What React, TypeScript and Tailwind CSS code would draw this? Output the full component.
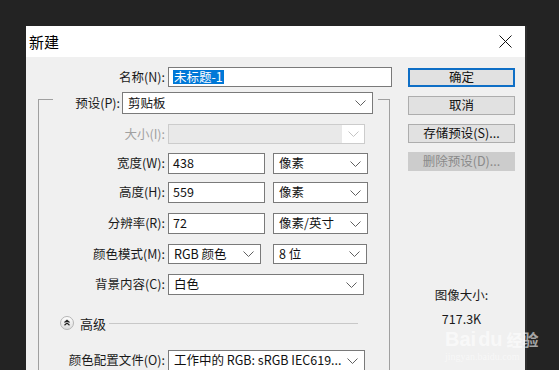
import React from "react";

const cjk = "font-['Microsoft_YaHei','Noto_Sans_CJK_SC',sans-serif]";

function Chevron({ disabled }: { disabled?: boolean }) {
    return (
        <svg width="11" height="6" viewBox="0 0 11 6" className="shrink-0">
            <polyline
                points="0.5,0.5 5.5,5.5 10.5,0.5"
                fill="none"
                stroke={disabled ? "#c4c4c4" : "#606060"}
                strokeWidth="1"
            />
        </svg>
    );
}

function Label({ text, w, disabled }: { text: string; w: string; disabled?: boolean }) {
    return (
        <div className={`${w} shrink-0 text-right whitespace-nowrap ${disabled ? "text-[#a0a0a0]" : "text-[#1a1a1a]"}`}>
            {text}
        </div>
    );
}

function Field({ value, w }: { value: string; w: string }) {
    return (
        <div className={`${w} h-full flex items-center border border-[#7a7a7a] bg-white pl-[4px] text-[#111]`}>
            {value}
        </div>
    );
}

function Select({ value, w }: { value: string; w: string }) {
    return (
        <div className={`${w} h-full flex items-center justify-between border border-[#7a7a7a] bg-white pl-[5px] pr-[6px] text-[#111] whitespace-nowrap`}>
            <span>{value}</span>
            <Chevron />
        </div>
    );
}

function Btn({ text, primary, disabled }: { text: string; primary?: boolean; disabled?: boolean }) {
    let cls = "border border-[#adadad] bg-[#e1e1e1] text-[#111]";
    if (primary) cls = "border-2 border-[#0f6fc6] bg-[#e1e1e1] text-[#111]";
    if (disabled) cls = "border border-[#cccccc] bg-[#cccccc] text-[#8a8a8a]";
    return (
        <div className={`h-[19px] w-full flex items-center justify-center ${cls}`}>{text}</div>
    );
}

export default function App() {
    return (
        <div className={`relative h-[370px] w-[559px] overflow-hidden bg-[#232323] pl-[26px] pt-[26px] ${cjk} text-[12.5px] leading-none`}>
            <div className="flex h-[360px] w-[499px] flex-col shadow-[2px_0_0_#2e2e2e]">
                {/* title bar */}
                <div className="flex h-[31px] shrink-0 items-center justify-between bg-white pl-[3px] pr-[13px]">
                    <span className="text-[15px] text-black">新建</span>
                    <svg width="13" height="13" viewBox="0 0 13 13">
                        <path d="M0.5 0.5 L12.5 12.5 M12.5 0.5 L0.5 12.5" stroke="#111" strokeWidth="1" />
                    </svg>
                </div>

                {/* body */}
                <div className="flex flex-1 bg-[#f0f0f0]">
                    {/* left column */}
                    <div className="flex w-[372px] flex-col">
                        <div className="mt-[10px] flex h-[20px] items-center gap-[3px]">
                            <Label text="名称(N):" w="w-[139px]" />
                            <div className="flex h-full w-[224px] items-center border border-[#7a7a7a] bg-white pl-[4px]">
                                <span className="bg-[#0078d7] px-[1px] py-[1px] text-white">未标题-1</span>
                            </div>
                        </div>

                        <div className="ml-[12px] mt-[12px] flex w-[352px] flex-1 flex-col border-l border-r border-t border-[#a0a0a0]">
                            {/* preset row sits on the frame */}
                            <div className="-mt-[8px] ml-[14px] flex h-[22px] w-[325px] items-center gap-[2px] bg-[#f0f0f0]">
                                <Label text="预设(P):" w="w-[67px]" />
                                <Select value="剪贴板" w="w-[251px]" />
                            </div>

                            <div className="mt-[10px] flex h-[20px] items-center gap-[3px]">
                                <Label text="大小(I):" w="w-[126px]" disabled />
                                <div className="flex h-full w-[197px] border border-[#cccccc] bg-[#e9e9e9]">
                                    <div className="flex-1" />
                                    <div className="flex w-[22px] items-center justify-center bg-white">
                                        <Chevron disabled />
                                    </div>
                                </div>
                            </div>

                            <div className="mt-[9px] flex h-[21px] items-center gap-[3px]">
                                <Label text="宽度(W):" w="w-[126px]" />
                                <Field value="438" w="w-[97px]" />
                                <div className="w-[2px]" />
                                <Select value="像素" w="w-[95px]" />
                            </div>

                            <div className="mt-[8px] flex h-[21px] items-center gap-[3px]">
                                <Label text="高度(H):" w="w-[126px]" />
                                <Field value="559" w="w-[97px]" />
                                <div className="w-[2px]" />
                                <Select value="像素" w="w-[95px]" />
                            </div>

                            <div className="mt-[10px] flex h-[21px] items-center gap-[3px]">
                                <Label text="分辨率(R):" w="w-[126px]" />
                                <Field value="72" w="w-[97px]" />
                                <div className="w-[2px]" />
                                <Select value="像素/英寸" w="w-[95px]" />
                            </div>

                            <div className="mt-[10px] flex h-[20px] items-center gap-[3px]">
                                <Label text="颜色模式(M):" w="w-[126px]" />
                                <Select value="RGB 颜色" w="w-[93px]" />
                                <div className="w-[6px]" />
                                <Select value="8 位" w="w-[94px]" />
                            </div>

                            <div className="mt-[10px] flex h-[21px] items-center gap-[3px]">
                                <Label text="背景内容(C):" w="w-[126px]" />
                                <Select value="白色" w="w-[196px]" />
                            </div>

                            <div className="ml-[21px] mr-[31px] mt-[21px] flex h-[14px] items-center">
                                <svg width="14" height="14" viewBox="0 0 14 14" className="shrink-0">
                                    <defs>
                                        <linearGradient id="adv" x1="0" y1="0" x2="0" y2="1">
                                            <stop offset="0" stopColor="#ffffff" />
                                            <stop offset="1" stopColor="#dcdcdc" />
                                        </linearGradient>
                                    </defs>
                                    <circle cx="7" cy="7" r="6.5" fill="url(#adv)" stroke="#b4b4b4" />
                                    <path d="M4.5 6.5 L7 4.3 L9.5 6.5 M4.5 9.3 L7 7.1 L9.5 9.3" fill="none" stroke="#222" strokeWidth="1.2" />
                                </svg>
                                <span className="ml-[6px] text-[13px] text-[#1a1a1a]">高级</span>
                                <div className="ml-[3px] h-px flex-1 bg-[#c8c8c8]" />
                            </div>

                            <div className="mt-[20px] flex h-[21px] items-center gap-[3px]">
                                <Label text="颜色配置文件(O):" w="w-[126px]" />
                                <Select value="工作中的 RGB: sRGB IEC619..." w="w-[197px]" />
                            </div>
                        </div>
                    </div>

                    {/* right column */}
                    <div className="ml-[10px] mt-[11px] flex w-[107px] flex-col gap-[9px]">
                        <Btn text="确定" primary />
                        <Btn text="取消" />
                        <Btn text="存储预设(S)..." />
                        <Btn text="删除预设(D)..." disabled />
                        <div className="mt-[109px] flex flex-col items-center gap-[11px] text-[#1a1a1a]">
                            <span>图像大小:</span>
                            <span>717.3K</span>
                        </div>
                    </div>
                </div>
            </div>

            {/* watermark */}
            <div className="pointer-events-none absolute left-[445px] top-[329px] flex flex-col items-start text-white/60">
                <span className="font-['Liberation_Sans',sans-serif] text-[20px] font-bold leading-none">
                    Bai<span className="ml-[2px]">du</span>
                    <span className={`ml-[4px] text-[16px] ${cjk}`}>经验</span>
                </span>
                <span className="mt-[3px] font-['Liberation_Serif',serif] text-[10px] leading-none text-white/50">jingyan.baidu.com</span>
            </div>
        </div>
    );
}
